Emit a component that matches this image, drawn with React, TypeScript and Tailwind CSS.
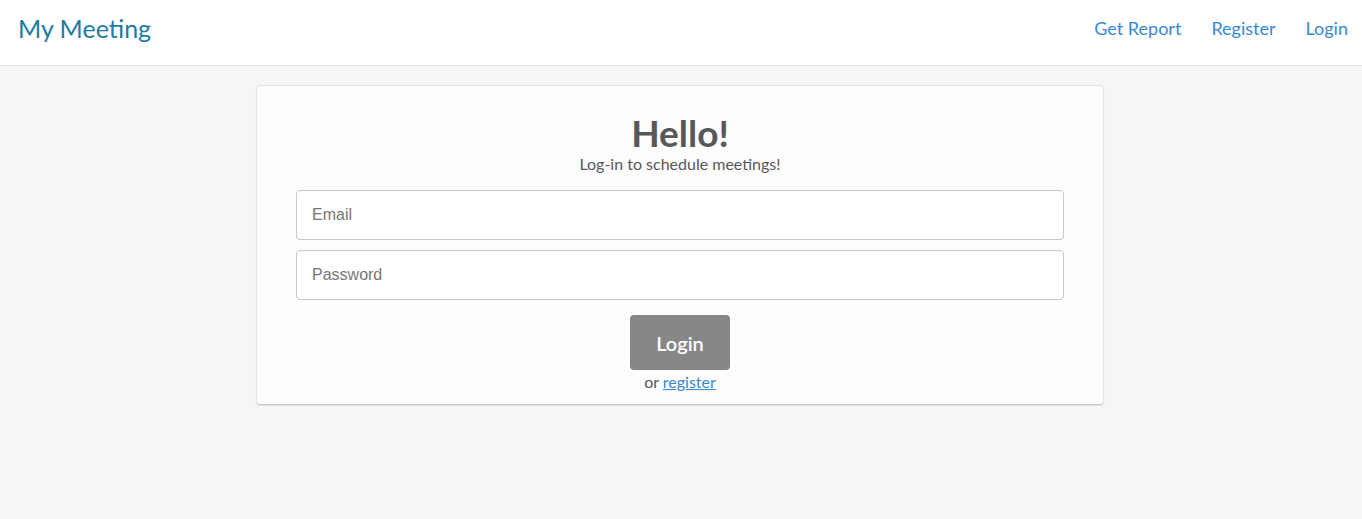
export default function App() {
  return (
    <div className="min-h-[519px] bg-[#f6f6f6] font-['Lato','Open_Sans',sans-serif]">
      {/* Header */}
      <header className="flex h-[66px] items-center justify-between border-b border-[#e0e0e0] bg-white pb-[8px] pl-[18px] pr-[14px]">
        <a href="#" className="text-[25px] text-[#1e7ba3] leading-none">
          My Meeting
        </a>
        <nav className="flex items-center gap-[30px] text-[18px] text-[#3689d4]">
          <a href="#">Get Report</a>
          <a href="#">Register</a>
          <a href="#">Login</a>
        </nav>
      </header>

      {/* Login card */}
      <main className="flex justify-center pt-[19px] pr-[2px]">
        <section className="w-[848px] rounded-[4px] border border-[#e3e3e3] border-b-[#c8c8c8] bg-[#fdfdfd] px-[39px] pt-[27px] pb-[12px] shadow-[0_1px_1px_rgba(0,0,0,0.08)]">
          <div className="text-center text-[#58585a]">
            <h1 className="text-[37px] font-bold leading-[40px]">Hello!</h1>
            <p className="mt-[1px] text-[16px] leading-[20px]">Log-in to schedule meetings!</p>
          </div>

          <form className="mt-[16px] flex flex-col gap-[10px]">
            <input
              type="email"
              placeholder="Email"
              className="h-[50px] w-full rounded-[4px] border border-[#c8c8c8] bg-white px-[15px] font-['Liberation_Sans',Arial,sans-serif] text-[16px] text-[#555] placeholder:text-[#777] outline-none"
            />
            <input
              type="password"
              placeholder="Password"
              className="h-[50px] w-full rounded-[4px] border border-[#c8c8c8] bg-white px-[15px] font-['Liberation_Sans',Arial,sans-serif] text-[16px] text-[#555] placeholder:text-[#777] outline-none"
            />
            <div className="mt-[5px] flex flex-col items-center">
              <button
                type="button"
                className="h-[55px] w-[100px] rounded-[4px] bg-[#878787] text-[20px] font-semibold text-white"
              >
                Login
              </button>
              <p className="mt-[2px] text-[16px] leading-[20px] text-[#555]">
                or{" "}
                <a href="#" className="text-[#3689d4] underline">
                  register
                </a>
              </p>
            </div>
          </form>
        </section>
      </main>
    </div>
  );
}
